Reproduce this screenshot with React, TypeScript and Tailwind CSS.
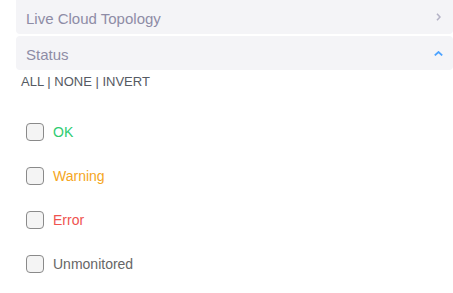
const statuses = [
    { label: 'OK', color: 'text-[#2ecc71]' },
    { label: 'Warning', color: 'text-[#f5a623]' },
    { label: 'Error', color: 'text-[#ef5350]' },
    { label: 'Unmonitored', color: 'text-[#666666]' },
];

export default function App() {
    return (
        <div className="w-[453px] h-[293px] bg-white overflow-hidden font-[family-name:Liberation_Sans,Arial,sans-serif]">
            <div className="ml-4 flex flex-col">
                <div className="h-[34px] bg-[#f4f4f7] rounded-b flex items-start justify-between pl-[10px] pr-[12px]">
                    <span className="mt-[10px] text-[15px] leading-[18px] text-[#8e8ca6]">Live Cloud Topology</span>
                    <svg width="5" height="8" viewBox="0 0 5 8" className="mt-[13px]" fill="none" stroke="#b4b2c6" strokeWidth="1.6">
                        <polyline points="1,0.8 4,4 1,7.2" />
                    </svg>
                </div>
                <div className="mt-[2px] h-[34px] bg-[#f4f4f7] rounded flex items-start justify-between pl-[10px] pr-[10px]">
                    <span className="mt-[10px] text-[15px] leading-[18px] text-[#8e8ca6]">Status</span>
                    <svg width="9" height="5" viewBox="0 0 9 5" className="mt-[15px]" fill="none" stroke="#4da3ff" strokeWidth="1.8">
                        <polyline points="0.8,4.4 4.5,1 8.2,4.4" />
                    </svg>
                </div>
            </div>
            <div className="pl-[21px] mt-[4px] text-[13px] text-[#555a63] leading-[15px]">
                ALL | NONE | INVERT
            </div>
            <div className="pl-[26px] mt-[34px] flex flex-col gap-[26px]">
                {statuses.map((s) => (
                    <label key={s.label} className="flex items-center gap-[9px] h-[18px]">
                        <span className="w-[18px] h-[18px] rounded-[4px] border border-[#8a8a8a] bg-[#f4f4f4]" />
                        <span className={`text-[14px] ${s.color}`}>{s.label}</span>
                    </label>
                ))}
            </div>
        </div>
    );
}
